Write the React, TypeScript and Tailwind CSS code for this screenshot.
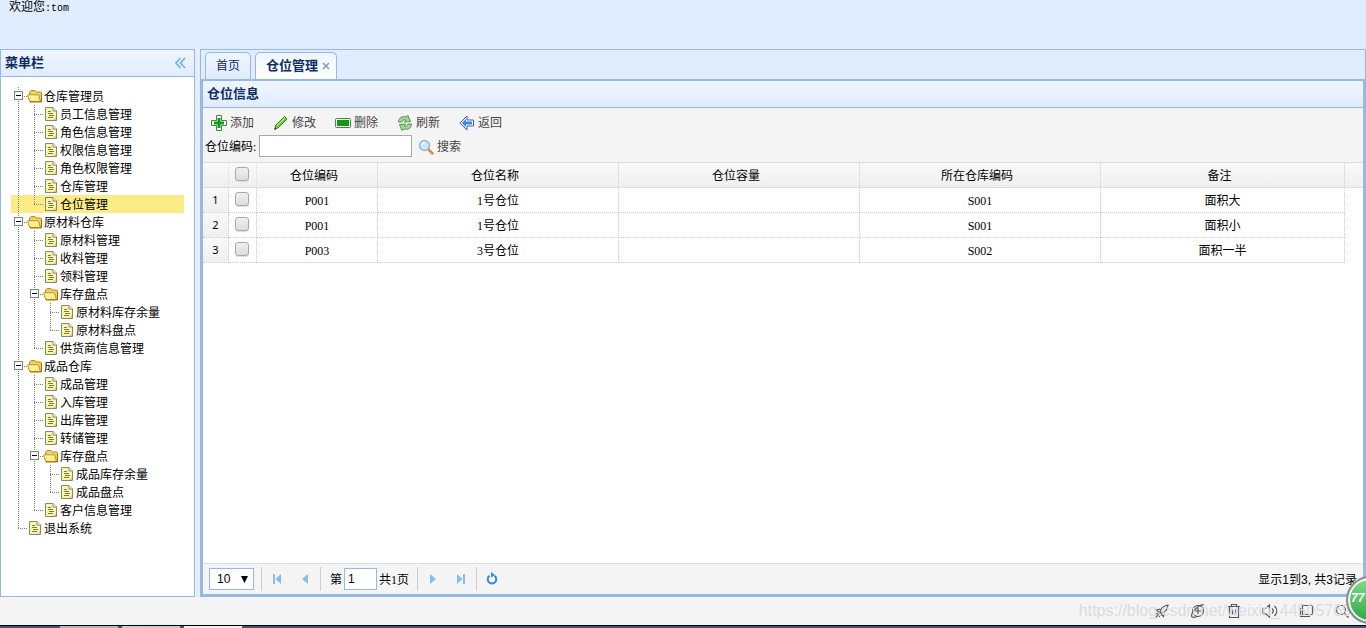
import { useState } from "react";
import type { ReactNode } from "react";

type TreeNode = {
  text: string;
  children?: TreeNode[];
};

const menu: TreeNode[] = [
  {
    text: "仓库管理员",
    children: [
      { text: "员工信息管理" },
      { text: "角色信息管理" },
      { text: "权限信息管理" },
      { text: "角色权限管理" },
      { text: "仓库管理" },
      { text: "仓位管理" },
    ],
  },
  {
    text: "原材料仓库",
    children: [
      { text: "原材料管理" },
      { text: "收料管理" },
      { text: "领料管理" },
      {
        text: "库存盘点",
        children: [{ text: "原材料库存余量" }, { text: "原材料盘点" }],
      },
      { text: "供货商信息管理" },
    ],
  },
  {
    text: "成品仓库",
    children: [
      { text: "成品管理" },
      { text: "入库管理" },
      { text: "出库管理" },
      { text: "转储管理" },
      {
        text: "库存盘点",
        children: [{ text: "成品库存余量" }, { text: "成品盘点" }],
      },
      { text: "客户信息管理" },
    ],
  },
  { text: "退出系统" },
];

const rows = [
  { code: "P001", name: "1号仓位", size: "", store: "S001", remark: "面积大" },
  { code: "P001", name: "1号仓位", size: "", store: "S001", remark: "面积小" },
  { code: "P003", name: "3号仓位", size: "", store: "S002", remark: "面积一半" },
];

const columns = ["仓位编码", "仓位名称", "仓位容量", "所在仓库编码", "备注"];

type LineKind = "line" | "join" | "elbow" | "minus";

function TreeLine({ kind }: { kind: LineKind }) {
  return (
    <svg width="16" height="18" className="shrink-0" shapeRendering="crispEdges" aria-hidden="true">
      <g stroke="#808080" strokeDasharray="1 1" fill="none">
        <path d={kind === "elbow" ? "M7.5 0V10" : "M7.5 0V18"} />
        {kind !== "line" && <path d="M7 9.5H16" />}
      </g>
      {kind === "minus" && (
        <>
          <rect x="3.5" y="4.5" width="8" height="8" fill="#fff" stroke="#808080" />
          <path d="M5 8.5H10" stroke="#000" />
        </>
      )}
    </svg>
  );
}

function FolderIcon() {
  return (
    <svg width="16" height="18" viewBox="0 1 16 18" className="shrink-0" aria-hidden="true">
      <path d="M2.5 14.5V6L4 4.500h4L9.500 6h4c.6 0 1 .4 1 1v8z" fill="#f0d060" stroke="#b98f1c" />
      <path d="M2.700 15.500.7 9.700c-.2-.5 0-.8.6-.8h9.500c.5 0 .9.300 1 .8l1.700 5.800z" fill="#fdee86" stroke="#b98f1c" />
      <path d="M2 10.200h8.800" stroke="#fffbd0" />
      <path d="M3 16h11.500V8" fill="none" stroke="#9a7413" />
    </svg>
  );
}

function FileIcon() {
  return (
    <svg width="16" height="18" className="shrink-0" aria-hidden="true">
      <path d="M2.500 2.500h7.500l3.500 3.500v9.500h-11z" fill="#fbf8a4" stroke="#85857a" />
      <path d="M10 2.500V6h3.500" fill="#fff" stroke="#85857a" />
      <path d="M5 6.500h3M5 8.500h5M6 10.500h5M5 12.500h5" stroke="#77775c" />
      <path d="m10 15 3-3v3z" fill="#f6c58c" />
    </svg>
  );
}

function TreeItems({
  nodes,
  depth,
  selected,
  onSelect,
}: {
  nodes: TreeNode[];
  depth: number;
  selected: string;
  onSelect: (text: string) => void;
}) {
  return (
    <ul>
      {nodes.map((node, i) => {
        const last = i === nodes.length - 1;
        const kind: LineKind = node.children ? "minus" : last ? "elbow" : "join";
        return (
          <li key={node.text}>
            <button
              type="button"
              onClick={() => onSelect(node.text)}
              className={`flex h-[18px] w-full items-center whitespace-nowrap text-left ${
                selected === node.text ? "bg-[#fbec88]" : "hover:bg-[#eaf2ff]"
              }`}
            >
              {Array.from({ length: depth }, (_, n) => (
                <TreeLine key={n} kind="line" />
              ))}
              <TreeLine kind={kind} />
              {node.children ? <FolderIcon /> : <FileIcon />}
              <span className="pt-0.5 pl-px leading-4">{node.text}</span>
            </button>
            {node.children && (
              <TreeItems
                nodes={node.children}
                depth={depth + 1}
                selected={selected}
                onSelect={onSelect}
              />
            )}
          </li>
        );
      })}
    </ul>
  );
}

function ToolButton({ label, children }: { label: string; children: ReactNode }) {
  return (
    <button type="button" className="flex h-6 w-[62px] items-center gap-[3px] pl-1 text-[#444]">
      <svg width="16" height="16" className="shrink-0" aria-hidden="true">
        {children}
      </svg>
      {label}
    </button>
  );
}

function PagerButton({ label, children }: { label: string; children: ReactNode }) {
  return (
    <button type="button" aria-label={label} className="flex size-7 items-center justify-center">
      <svg width="16" height="16" fill="#7fc1ee" aria-hidden="true">
        {children}
      </svg>
    </button>
  );
}

function FooterIcon({ label, children }: { label: string; children: ReactNode }) {
  return (
    <button type="button" aria-label={label} className="size-4">
      <svg width="16" height="16" fill="none" stroke="#555" strokeWidth="1.2" aria-hidden="true">
        {children}
      </svg>
    </button>
  );
}

function Separator() {
  return <div className="mx-px h-6 w-px bg-[#ccc]" />;
}

const checkboxClass =
  "block size-3.5 appearance-none rounded-[3px] border border-[#a8a8a8] bg-linear-to-b from-[#f0f0f0] to-[#dcdcdc] shadow-[0_1px_1px_#ddd] checked:bg-[#95b8e7]";

function DataTable() {
  const cell = "border-r border-b border-dotted border-[#ccc] pt-px text-center font-normal";
  return (
    <table className="w-full table-fixed border-separate border-spacing-0 border-t border-[#ddd]">
      <colgroup>
        <col className="w-[26px]" />
        <col className="w-7" />
        <col className="w-[121px]" />
        <col className="w-[241px]" />
        <col className="w-[241px]" />
        <col className="w-[241px]" />
        <col />
        <col className="w-[18px]" />
      </colgroup>
      <thead>
        <tr className="h-[25px] bg-linear-to-b from-[#f9f9f9] to-[#efefef]">
          <th className="border-r border-b border-[#ddd] [border-right-style:dotted]" />
          <th className="border-r border-b border-[#ddd] pl-1.5 pb-0.5 [border-right-style:dotted]">
            <input type="checkbox" aria-label="全选" className={checkboxClass} />
          </th>
          {columns.map((column) => (
            <th
              key={column}
              className="border-r border-b border-[#ddd] border-r-[#ccc] pt-0.5 pr-1.5 text-center font-normal [border-right-style:dotted]"
            >
              {column}
            </th>
          ))}
          <th className="border-b border-[#ddd]" />
        </tr>
      </thead>
      <tbody>
        {rows.map((row, i) => (
          <tr key={i} className="h-[25px]">
            <td className={`${cell} bg-linear-to-b from-[#f9f9f9] to-[#efefef] font-['Noto_Sans'] text-[11px]`}>
              {i + 1}
            </td>
            <td className="border-r border-b border-dotted border-[#ccc] pb-0.5 pl-1.5">
              <input type="checkbox" aria-label={`选择第${i + 1}行`} className={checkboxClass} />
            </td>
            <td className={cell}>{row.code}</td>
            <td className={cell}>{row.name}</td>
            <td className={cell}>{row.size}</td>
            <td className={cell}>{row.store}</td>
            <td className={cell}>{row.remark}</td>
            <td />
          </tr>
        ))}
      </tbody>
    </table>
  );
}

export default function App() {
  const [selected, setSelected] = useState("仓位管理");
  const [page, setPage] = useState("1");
  const [keyword, setKeyword] = useState("");

  return (
    <div className="relative flex h-screen flex-col overflow-hidden bg-[#f4f4f4] font-['Liberation_Serif','Noto_Sans_CJK_SC',serif] text-xs text-black">
      <header className="h-[49px] shrink-0 bg-[#e0ecff] pl-[9px] leading-[14px]">
        欢迎您<span className="font-['Liberation_Mono'] text-[10px]">:tom</span>
      </header>

      <div className="flex min-h-0 flex-1 gap-[5px] bg-[#e6eef8]">
        <aside className="flex w-[195px] shrink-0 flex-col border border-[#95b8e7] bg-white">
          <div className="flex h-[27px] shrink-0 items-center justify-between border-b border-[#95b8e7] bg-linear-to-b from-[#eff5ff] to-[#e0ecff] px-1">
            <h2 className="text-[13px] font-bold text-[#0e2d5f]">菜单栏</h2>
            <button type="button" aria-label="折叠菜单" className="mr-px size-4">
              <svg width="16" height="16" fill="none" stroke="#6cb2e8" strokeWidth="1.6" aria-hidden="true">
                <path d="M7.500 3 3 8l4.500 5M12 3 7.500 8l4.500 5" />
              </svg>
            </button>
          </div>
          <nav className="p-2.5">
            <TreeItems nodes={menu} depth={0} selected={selected} onSelect={setSelected} />
          </nav>
        </aside>

        <main className="flex min-w-0 flex-1 flex-col border-t border-l border-[#95b8e7]">
          <div className="flex h-[29px] shrink-0 items-end gap-1 border-r border-[#95b8e7] bg-[#e0ecff] pl-1">
            <button
              type="button"
              className="h-[27px] rounded-t-[5px] border border-b-0 border-[#95b8e7] bg-linear-to-b from-[#eff5ff] to-[#e0ecff] px-2.5 text-[#0e2d5f]"
            >
              首页
            </button>
            <div className="flex h-[27px] items-center gap-1 rounded-t-[5px] border border-b-0 border-[#95b8e7] bg-linear-to-b from-[#eff5ff] to-white pr-1.5 pl-2.5">
              <button type="button" className="text-[13px] font-bold text-[#0e2d5f]">
                仓位管理
              </button>
              <button type="button" aria-label="关闭">
                <svg width="8" height="8" stroke="#7d9fd0" strokeWidth="1.6" aria-hidden="true">
                  <path d="m1 1 6 6M7 1 1 7" />
                </svg>
              </button>
            </div>
          </div>

          <section className="flex min-h-0 flex-1 flex-col border-2 border-[#95b8e7] border-r-[3px] border-b-[3px] bg-white">
            <h1 className="flex h-[27px] shrink-0 items-center border-b border-[#95b8e7] bg-linear-to-b from-[#eff5ff] to-[#e0ecff] pl-1 text-[13px] font-bold text-[#0e2d5f]">
              仓位信息
            </h1>

            <div className="h-[54px] shrink-0 bg-[#f4f4f4] pt-[3px]">
              <div className="flex pl-1">
                <ToolButton label="添加">
                  <path d="M5.500.5h5v5h5v5h-5v5h-5v-5h-5v-5h5z" fill="#fff" stroke="#3f8a3f" strokeLinejoin="round" />
                  <path d="M6.500 3h3v3.500H13v3H9.500V13h-3V9.500H3v-3h3.500z" fill="#129a17" />
                </ToolButton>
                <ToolButton label="修改">
                  <path d="m1.500 14.500 1.500-4.500L11.500 1.500 14 4 5.500 12.500z" fill="#6cce3c" stroke="#2d8a1c" strokeLinejoin="round" />
                  <path d="M4 10.500 12 2.800" stroke="#c9f5a8" />
                  <path d="m1.500 14.500.6-2.200 1.600 1.500z" fill="#333" />
                </ToolButton>
                <ToolButton label="删除">
                  <rect x=".5" y="3.500" width="15" height="9" rx="1" fill="#fff" stroke="#3f8a3f" />
                  <rect x="2" y="5" width="12" height="6" fill="#129a17" />
                </ToolButton>
                <ToolButton label="刷新">
                  <path
                    d="M1.500 7C1.500 3 5 .8 9 2l2-1.500 2.500 6-6 .5 1.500-2C6.500 4.300 5 5.500 4.800 7z"
                    fill="#a5d99a"
                    stroke="#4f9450"
                    strokeLinejoin="round"
                  />
                  <path
                    d="M14.500 9c0 4-3.500 6.200-7.500 5l-2 1.500-2.500-6 6-.5L7 11c2.500.7 4-.5 4.200-2z"
                    fill="#a5d99a"
                    stroke="#4f9450"
                    strokeLinejoin="round"
                  />
                </ToolButton>
                <ToolButton label="返回">
                  <path d="M.8 8 8 1v4h6.500v6H8v4z" fill="#fff" stroke="#4a55b8" strokeLinejoin="round" />
                  <path d="m2.800 8 4.200-4v2.500h6v3H7V12z" fill="#2f8be8" />
                </ToolButton>
              </div>
              <div className="flex items-start pl-0.5">
                <label htmlFor="code" className="w-[54px] pt-1">
                  仓位编码:
                </label>
                <input
                  id="code"
                  value={keyword}
                  onChange={(e) => setKeyword(e.target.value)}
                  className="mr-0.5 h-[22px] w-[153px] border border-[#a9a9a9] bg-white px-1"
                />
                <ToolButton label="搜索">
                  <path d="m10 10 4.500 4.500" stroke="#dd8b35" strokeWidth="2.500" strokeLinecap="round" />
                  <circle cx="6.500" cy="6.500" r="5" fill="#c8e6fb" stroke="#94b5d8" strokeWidth="1.400" />
                  <path d="M3.800 6.500c0-1.500 1.200-2.700 2.700-2.700" fill="none" stroke="#fff" strokeWidth="1.500" />
                </ToolButton>
              </div>
            </div>

            <div className="min-h-0 flex-1 overflow-hidden">
              <DataTable />
            </div>

            <div className="flex h-[31px] shrink-0 items-center border-t border-[#ddd] bg-[#f4f4f4] px-1.5">
              <div className="relative mr-1.5">
                <select
                  aria-label="每页记录数"
                  defaultValue="10"
                  className="block h-[22px] w-[45px] appearance-none border border-[#95b8e7] bg-white pl-[7px] font-['Liberation_Sans'] text-xs"
                >
                  <option>10</option>
                  <option>20</option>
                  <option>50</option>
                </select>
                <svg width="7" height="7" className="pointer-events-none absolute top-2 right-1.5" aria-hidden="true">
                  <path d="M0 0h7L3.500 7z" />
                </svg>
              </div>
              <Separator />
              <PagerButton label="首页">
                <path d="M4 3h2v10H4zM12 3v10L6.500 8z" />
              </PagerButton>
              <PagerButton label="上一页">
                <path d="M11 3v10L5 8z" />
              </PagerButton>
              <Separator />
              <label htmlFor="page" className="pt-0.5 pl-2">
                第
              </label>
              <input
                id="page"
                value={page}
                onChange={(e) => setPage(e.target.value)}
                className="mx-0.5 h-[22px] w-[33px] border border-[#95b8e7] bg-white pl-[3px] font-['Liberation_Sans'] text-xs"
              />
              <span className="pt-0.5 pr-[7px]">共1页</span>
              <Separator />
              <PagerButton label="下一页">
                <path d="M5 3v10l6-5z" />
              </PagerButton>
              <PagerButton label="末页">
                <path d="M10 3h2v10h-2zM4 3v10l5.500-5z" />
              </PagerButton>
              <Separator />
              <PagerButton label="刷新">
                <path d="M5.500 4.800a4.300 4.300 0 1 0 5 0" fill="none" stroke="#2a8fd8" strokeWidth="2" />
                <path d="M7 1v5.500L11 4z" fill="#2a8fd8" />
              </PagerButton>
              <span className="ml-auto pt-0.5 font-['Liberation_Sans','Noto_Sans_CJK_SC',sans-serif]">
                显示1到3, 共3记录
              </span>
            </div>
          </section>
        </main>
      </div>

      <footer className="relative flex h-7 shrink-0 items-center justify-end gap-5 pr-4">
        <span className="pointer-events-none absolute right-[15px] text-[16px] whitespace-nowrap text-[#dcdcdc] font-['Liberation_Sans']">
          https://blog.csdn.net/weixin_44505769
        </span>
        <FooterIcon label="加速">
          <path d="M6 10C6 6 9 3 14 2c-.5 5-3.500 8-8 8zM6 6 2.500 7 5 9M10 10l-.5 3.500L7 11M5 11l-3.500 3.500M4 10l-2 1M6 12l-1 2" />
        </FooterIcon>
        <FooterIcon label="浏览器">
          <circle cx="8" cy="8" r="5.500" />
          <path d="M5 8h6M8 5v6M2 14C0 11 8 1 14 2M2 14c2 1 5-.5 6-1" />
        </FooterIcon>
        <FooterIcon label="清理">
          <path d="M2 3.500h12M5.500 3V1.500h5V3M3.500 4v10.500h9V4M6.500 6.500v5M9.500 6.500v5" />
        </FooterIcon>
        <FooterIcon label="声音">
          <path d="M1 5.500h2.500L7.500 2v12l-4-3.500H1zM10 5.500c1.500 1.500 1.500 3.500 0 5M12.500 3c3 3 3 7 0 10" />
        </FooterIcon>
        <FooterIcon label="窗口">
          <path d="M4.500 2.500h10v9h-10zM2.500 5v8.500H12" />
        </FooterIcon>
        <FooterIcon label="缩放">
          <circle cx="7" cy="7" r="4.500" />
          <path d="m10.500 10.500 4 4" />
        </FooterIcon>
      </footer>

      <div className="flex h-[3px] shrink-0 gap-1 border-t border-black bg-[#46546e] pl-[60px]">
        <div className="w-[58px] bg-[#b4b6bd]" />
        <div className="w-[58px] bg-[#c8cad0]" />
        <div className="w-[58px] bg-[#eeeef2]" />
      </div>

      <div className="absolute -right-7 bottom-1 flex size-12 items-center rounded-full border-2 border-[#8a8f8a] bg-linear-to-b from-[#7fdc8c] to-[#28a745] pb-1 pl-[3px] font-['Liberation_Sans'] text-xs leading-none font-bold text-white italic shadow-[inset_0_0_0_2px_#ffffff]">
        77
      </div>
    </div>
  );
}
